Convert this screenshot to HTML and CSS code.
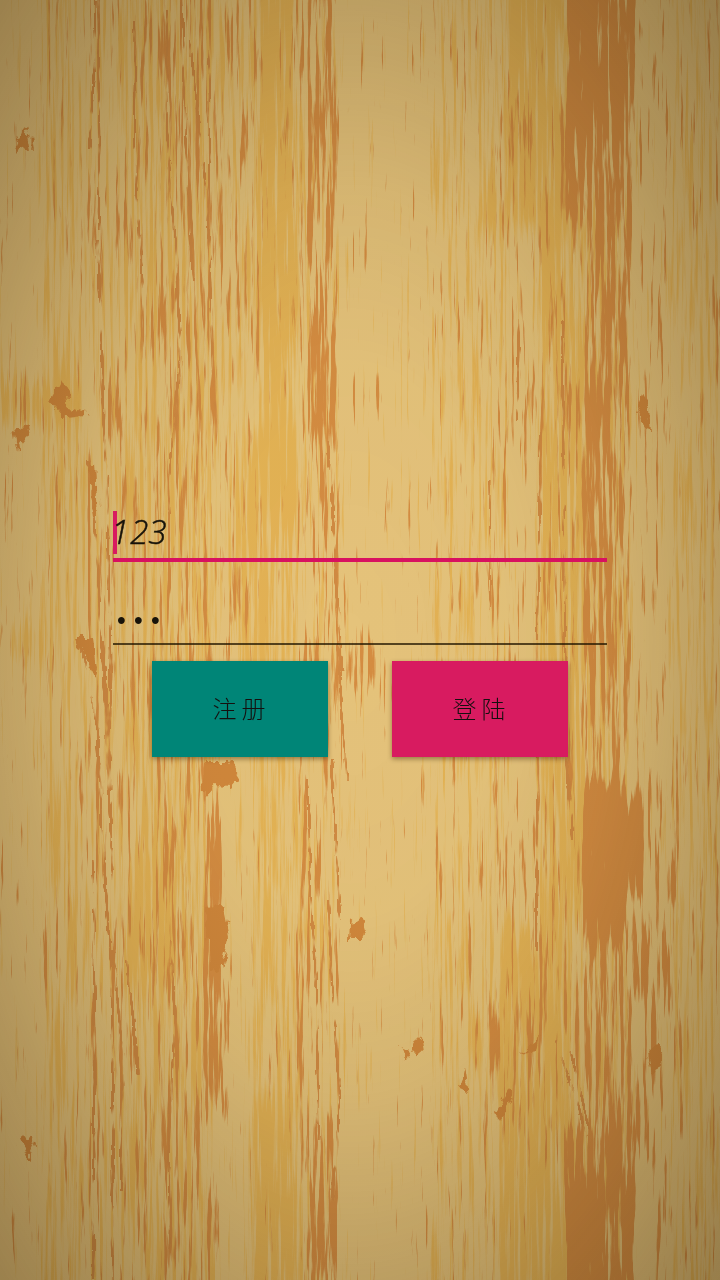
FILE: index.html
```html
<!DOCTYPE html>
<html lang="zh">
<head>
<meta charset="utf-8">
<title>登陆</title>
<link rel="stylesheet" href="styles.css">
</head>
<body>
<main class="screen">
  <svg class="wood" viewBox="0 0 720 1280" aria-hidden="true">
    <defs>
      <filter id="stain" filterUnits="userSpaceOnUse" x="0" y="-40" width="720" height="1360" color-interpolation-filters="sRGB">
        <feGaussianBlur in="SourceAlpha" stdDeviation="1.6 12" result="d"/>
        <feTurbulence type="fractalNoise" baseFrequency="0.25 0.011" numOctaves="4" seed="8" result="n"/>
        <feComposite in="d" in2="n" operator="arithmetic" k2="0.5" k3="0.8"/>
        <feComponentTransfer result="m"><feFuncA type="linear" slope="11" intercept="-6.45"/></feComponentTransfer>
        <feFlood flood-color="#d58d42"/>
        <feComposite in2="m" operator="in"/>
      </filter>
      <filter id="veins" filterUnits="userSpaceOnUse" x="0" y="-40" width="720" height="1360" color-interpolation-filters="sRGB">
        <feTurbulence type="fractalNoise" baseFrequency="0.1 0.03" numOctaves="3" seed="15" result="n"/>
        <feDisplacementMap in="SourceGraphic" in2="n" scale="5" xChannelSelector="R" yChannelSelector="G" result="g"/>
        <feComposite in="g" in2="n" operator="arithmetic" k1="1" k2="0" k3="0"/>
        <feComponentTransfer result="m"><feFuncA type="linear" slope="8" intercept="-2.9"/></feComponentTransfer>
        <feFlood flood-color="#d08a42"/>
        <feComposite in2="m" operator="in"/>
      </filter>
      <filter id="tint" filterUnits="userSpaceOnUse" x="0" y="-40" width="720" height="1360" color-interpolation-filters="sRGB">
        <feGaussianBlur in="SourceAlpha" stdDeviation="4 16" result="d"/>
        <feTurbulence type="fractalNoise" baseFrequency="0.28 0.009" numOctaves="4" seed="21" result="n"/>
        <feComposite in="d" in2="n" operator="arithmetic" k2="0.5" k3="0.8"/>
        <feComponentTransfer result="m"><feFuncA type="linear" slope="6" intercept="-3.25"/></feComponentTransfer>
        <feFlood flood-color="#e4b355"/>
        <feComposite in2="m" operator="in"/>
      </filter>
      <filter id="rough" x="-20%" y="-20%" width="140%" height="140%">
        <feTurbulence type="fractalNoise" baseFrequency="0.16 0.07" numOctaves="2" seed="4"/>
        <feDisplacementMap in="SourceGraphic" scale="14" xChannelSelector="R" yChannelSelector="G"/>
      </filter>
      <radialGradient id="shade" gradientUnits="userSpaceOnUse" cx="0" cy="0" r="1" gradientTransform="translate(350 640) scale(520 920)">
        <stop offset="0" stop-color="#2a1c08" stop-opacity="0"/>
        <stop offset=".3" stop-color="#2a1c08" stop-opacity=".02"/>
        <stop offset=".5" stop-color="#2a1c08" stop-opacity=".09"/>
        <stop offset=".7" stop-color="#2a1c08" stop-opacity=".22"/>
        <stop offset="1" stop-color="#2a1c08" stop-opacity=".42"/>
      </radialGradient>
    </defs>
    <rect width="720" height="1280" fill="#e5c37b"/>
    <g filter="url(#tint)">
      <rect x="40" y="-40" width="36" height="1360" opacity=".36"/>
      <rect x="76" y="-40" width="50" height="1360" opacity=".26"/>
      <rect x="125" y="-40" width="90" height="1360" opacity=".4"/>
      <rect x="215" y="-40" width="30" height="680" opacity=".26"/>
      <rect x="245" y="-40" width="20" height="1360" opacity=".3"/>
      <rect x="260" y="-40" width="38" height="560" opacity=".7"/>
      <rect x="235" y="440" width="62" height="260" opacity=".45"/>
      <rect x="260" y="700" width="40" height="400" opacity=".38"/>
      <rect x="255" y="1100" width="45" height="220" opacity=".7"/>
      <rect x="300" y="-40" width="40" height="1360" opacity=".2"/>
      <rect x="430" y="-40" width="80" height="1360" opacity=".27"/>
      <rect x="506" y="-40" width="60" height="270" opacity=".7"/>
      <rect x="537" y="200" width="46" height="730" opacity=".6"/>
      <rect x="500" y="930" width="75" height="390" opacity=".65"/>
      <rect x="580" y="200" width="50" height="1120" opacity=".35"/>
      <rect x="670" y="-40" width="50" height="1360" opacity=".3"/>
      <rect x="130" y="860" width="45" height="120" opacity=".6"/>
      <rect x="0" y="385" width="85" height="30" opacity=".9"/>
      <rect x="10" y="630" width="32" height="24" opacity=".9"/>
      <rect x="300" y="915" width="22" height="24" opacity=".9"/>
      <path d="M465 1025h20v20h-20zM480 200h20v25h-20z"/>
    </g>
    <g filter="url(#stain)">
      <rect x="0" y="60" width="32" height="700" opacity=".1"/>
      <rect x="40" y="-40" width="50" height="1360" opacity=".1"/>
      <rect x="88" y="-40" width="16" height="1360" opacity=".2"/>
      <rect x="110" y="-40" width="50" height="1360" opacity=".22"/>
      <rect x="160" y="-40" width="32" height="1360" opacity=".31"/>
      <rect x="192" y="-40" width="26" height="800" opacity=".29"/>
      <rect x="218" y="-40" width="42" height="700" opacity=".22"/>
      <rect x="192" y="760" width="26" height="560" opacity=".28"/>
      <rect x="260" y="-40" width="38" height="370" opacity=".12"/>
      <rect x="260" y="840" width="38" height="480" opacity=".08"/>
      <rect x="297" y="-40" width="11" height="1360" opacity=".26"/>
      <rect x="308" y="-40" width="31" height="280" opacity=".47"/>
      <rect x="308" y="240" width="31" height="80" opacity=".38"/>
      <rect x="308" y="320" width="29" height="120" opacity=".58"/>
      <rect x="308" y="440" width="34" height="340" opacity=".32"/>
      <rect x="300" y="780" width="40" height="320" opacity=".2"/>
      <rect x="308" y="1120" width="30" height="200" opacity=".48"/>
      <rect x="343" y="140" width="77" height="700" opacity=".02"/>
      <rect x="420" y="-40" width="75" height="1360" opacity=".1"/>
      <rect x="490" y="60" width="48" height="900" opacity=".19"/>
      <rect x="538" y="100" width="43" height="840" opacity=".21"/>
      <rect x="485" y="960" width="60" height="180" opacity=".27"/>
      <rect x="538" y="940" width="42" height="150" opacity=".28"/>
      <rect x="566" y="-40" width="70" height="100" opacity=".64"/>
      <rect x="566" y="60" width="68" height="70" opacity=".72"/>
      <rect x="567" y="-40" width="32" height="160" opacity=".5"/>
      <rect x="563" y="130" width="70" height="90" opacity=".57"/>
      <rect x="585" y="220" width="46" height="180" opacity=".5"/>
      <rect x="582" y="390" width="34" height="270" opacity=".56"/>
      <rect x="616" y="390" width="14" height="270" opacity=".36"/>
      <rect x="582" y="650" width="50" height="110" opacity=".4"/>
      <rect x="583" y="780" width="42" height="160" opacity=".9"/>
      <rect x="625" y="795" width="18" height="105" opacity=".8"/>
      <rect x="582" y="920" width="58" height="220" opacity=".43"/>
      <rect x="564" y="1130" width="72" height="90" opacity=".62"/>
      <rect x="566" y="1190" width="68" height="130" opacity=".68"/>
      <rect x="567" y="1180" width="32" height="140" opacity=".5"/>
      <rect x="636" y="-40" width="34" height="220" opacity=".26"/>
      <rect x="640" y="250" width="28" height="180" opacity=".22"/>
      <rect x="634" y="430" width="34" height="380" opacity=".14"/>
      <rect x="642" y="780" width="36" height="180" opacity=".27"/>
      <rect x="640" y="940" width="40" height="140" opacity=".38"/>
      <rect x="640" y="1080" width="24" height="80" opacity=".28"/>
      <rect x="655" y="1150" width="15" height="170" opacity=".3"/>
      <rect x="670" y="-40" width="45" height="1360" opacity=".06"/>
      <rect x="715" y="-40" width="5" height="1360" opacity=".3"/>
      <rect x="204" y="960" width="27" height="160" opacity=".4"/>
      <rect x="206" y="810" width="16" height="170" opacity=".45"/>
      <rect x="345" y="630" width="28" height="60" opacity=".38"/>
    </g>
    <g class="vein" filter="url(#veins)">
      <path d="M95 0V55L89 150M99 -10v240M98 240l6 170 3 60 4 230-9 100"/>
      <path d="M135 20v150l8 120M167 10v120l8 120 6 110-12 120v60M182 0l3 110 8 170M190 40l18 180M209 50v190l5 180"/>
      <path d="M88 460l7 60 6 110 12 250M80 640l18 90 4 100 10 150 1 300M104 640l7 150M93 860l2 200-2 220M113 950l10 110-2 130M127 960l12 115M170 940l5 80-6 110v120"/>
      <path d="M328 440l8 130 6 100M337 640l10 140M332 760l8 160M328 900l6 120 6 80-8 100M315 950l4 190M307 780l5 140 5 60"/>
      <path d="M519 320l-2 100M541 430l-4 210M538 730l-2 220M562 320l4 420 6 100M490 480v130M555 1040l22 60 12 50M570 1050l20 80"/>
    </g>
    <g class="knots" filter="url(#rough)">
      <path d="M14 152l12-28 5 26-6-2zM48 402l9-16 4-8 5 9 3 20 18 4-3 6-18 2-6-3zM13 429l15-4 2 10-13 16zM76 638l18 0 4 28-4 12z"/>
      <path d="M88 464h8l3 50-6 6zM203 762h28l9 15-9 10-18-1-9 10zM207 905l15-1 7 34-8 34-9-1-6-35z"/>
      <path d="M351 922l13-3 4 13-4 8h-14zM401 1046l5 14 4-5zM411 1052l9-16 3 18zM459 1090l5-22 4 24zM494 1114l15-26 5 8-13 22zM519 1054l20-18-3 15zM20 1140l10-7 5 14-6 14z"/>
      <path d="M636 412l7-17 6 13 2 24zM648 1053l9-8 6 7-3 16-8 4z"/>
    </g>
    <rect width="720" height="1280" fill="url(#shade)"/>
  </svg>

  <form class="login">
    <div class="field field-active">
      <span class="caret"></span>
      <span class="digits"><span class="lead">1</span>23</span>
    </div>
    <div class="field field-password"><span class="bullets">•••</span></div>
    <div class="actions">
      <button type="button" class="btn btn-register">注册</button>
      <button type="button" class="btn btn-login">登陆</button>
    </div>
  </form>
</main>
</body>
</html>
```
FILE: styles.css
```css
* { box-sizing: border-box; }

body {
  margin: 0;
}

.screen {
  display: grid;
  width: 720px;
  height: 1280px;
  overflow: hidden;
}

.wood,
.login {
  grid-area: 1 / 1;
}

.wood {
  width: 720px;
  height: 1280px;
}

.vein {
  fill: none;
  stroke: #000;
  stroke-width: 3;
}

.knots { fill: #d0873b; }

.login {
  z-index: 1;
  display: flex;
  flex-direction: column;
  align-items: center;
  padding-top: 511px;
}

.field {
  display: flex;
  width: 494px;
}

.field-active {
  height: 51px;
  border-bottom: 4px solid #d81160;
}

.caret {
  width: 4px;
  height: 43px;
  background: #d81b60;
}

.digits {
  margin-left: -6px;
  font: italic 300 33px/41px "Open Sans", sans-serif;
  -webkit-text-stroke: .5px #17130a;
  color: #17130a;
}

.lead {
  letter-spacing: 1px;
}

.field-password {
  height: 83px;
  padding: 38px 0 0 4px;
  border-bottom: 2px solid rgba(35, 23, 0, .75);
}

.bullets {
  font: 25px/40px "Liberation Sans", sans-serif;
  letter-spacing: 8.25px;
  color: #17130a;
}

.actions {
  display: flex;
  gap: 64px;
  margin-top: 16px;
}

.btn {
  width: 176px;
  height: 96px;
  padding: 0 0 2px 3px;
  border: 0;
  font: oblique 8deg 300 24px/1 "Noto Sans CJK SC", sans-serif;
  letter-spacing: 5px;
  color: #15100f;
  box-shadow: 0 2px 5px rgba(60, 35, 0, .45);
}

.btn-register { background: #008577; }
.btn-login { background: #d81b60; }
```
